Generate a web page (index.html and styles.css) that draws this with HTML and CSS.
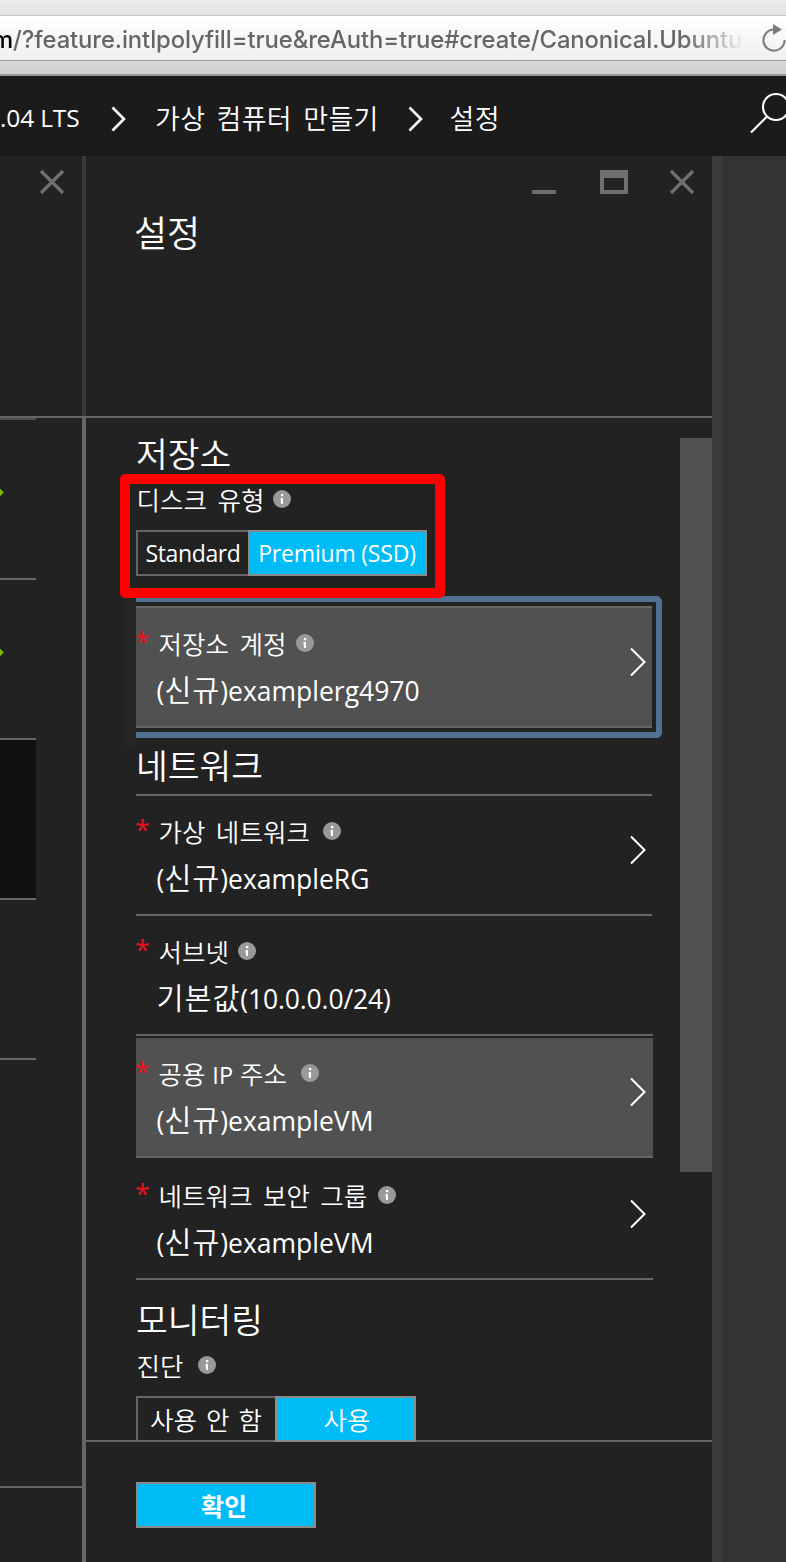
FILE: index.html
```html
<!DOCTYPE html>
<html lang="ko">
<head>
<meta charset="utf-8">
<title>설정</title>
<link rel="stylesheet" href="styles.css">
</head>
<body>
<div class="toolbar">
  <div class="address">
    <div class="url"><span class="host">m</span>/?feature.intlpolyfill=true&amp;reAuth=true#create/Canonical.Ubuntu</div>
    <svg class="reload" width="26" height="32" viewBox="0 0 26 32"><path d="M13 7.600A10.600 10.600 0 1 0 24.600 18" fill="none" stroke="#7b7b7b" stroke-width="2"/><path d="M13 2v11l9-5.500z" fill="#7b7b7b"/></svg>
  </div>
</div>
<nav class="crumbs">
  <span class="crumb crumb-os">.04 LTS</span>
  <svg class="sep sep-1" width="18" height="28" viewBox="0 0 18 28"><path d="M1.500 3.500l11.500 11.500L1.500 26.500" fill="none" stroke="#fff" stroke-width="2.600"/></svg>
  <span class="crumb crumb-ko crumb-create">가상 컴퓨터 만들기</span>
  <svg class="sep sep-2" width="18" height="28" viewBox="0 0 18 28"><path d="M2.500 3.500l11.500 11.500L2.500 26.500" fill="none" stroke="#fff" stroke-width="2.600"/></svg>
  <span class="crumb crumb-ko">설정</span>
  <svg class="search" width="38" height="44" viewBox="0 0 38 44"><g fill="none" stroke="#fff" stroke-width="2.200"><circle cx="28" cy="16" r="13"/><path d="M19 25.500L3 41.500"/></g></svg>
</nav>
<main class="blades">
  <aside class="prev">
    <div class="prev-head"><svg width="26" height="26" viewBox="0 0 26 26"><path d="M2 2l22 22M24 2L2 24" stroke="#707070" stroke-width="3.200"/></svg></div>
    <div class="prev-body">
      <div class="step first"><i class="tick"></i></div>
      <div class="step"><i class="tick"></i></div>
      <div class="step current"></div>
      <div class="step"></div>
    </div>
    <div class="prev-foot"></div>
  </aside>
  <div class="divider"></div>
  <section class="blade">
    <header class="blade-head">
      <div class="controls">
        <svg class="min" width="24" height="26" viewBox="0 0 24 26"><path d="M0 21h24v4H0z" fill="#707070"/></svg>
        <svg width="28" height="26" viewBox="0 0 28 26"><path d="M0 1h28v24H0zM4 9v12h20V9z" fill="#707070" fill-rule="evenodd"/></svg>
        <svg width="26" height="26" viewBox="0 0 26 26"><path d="M2 2l22 22M24 2L2 24" stroke="#707070" stroke-width="3.200"/></svg>
      </div>
      <h1>설정</h1>
    </header>
    <div class="blade-body">
      <div class="form">
        <h2>저장소</h2>
        <div class="field disk">
          <div class="caption"><span class="label w-disk">디스크 유형</span><svg class="info" viewBox="0 0 18 18"><circle cx="9" cy="9" r="9"/><path d="M8 4h2.300v2.300H8zM7.500 8H10v6H8z"/></svg></div>
          <div class="seg"><span class="opt std">Standard</span><span class="opt on prem">Premium (SSD)</span></div>
        </div>
        <div class="focus">
          <div class="row filled top">
            <div class="caption"><b class="req">*</b><span class="label w-acct">저장소 계정</span><svg class="info" viewBox="0 0 18 18"><circle cx="9" cy="9" r="9"/><path d="M8 4h2.300v2.300H8zM7.500 8H10v6H8z"/></svg></div>
            <div class="value">(<span class="ko">신규</span>)examplerg4970</div>
            <svg class="go" viewBox="0 0 18 30"><path d="M2 1.500l13.500 13.500L2 28.500"/></svg>
          </div>
        </div>
        <h2 class="net">네트워크</h2>
        <div class="row top">
          <div class="caption"><b class="req">*</b><span class="label w-vnet">가상 네트워크</span><svg class="info" viewBox="0 0 18 18"><circle cx="9" cy="9" r="9"/><path d="M8 4h2.300v2.300H8zM7.500 8H10v6H8z"/></svg></div>
          <div class="value">(<span class="ko">신규</span>)exampleRG</div>
          <svg class="go" viewBox="0 0 18 30"><path d="M2 1.500l13.500 13.500L2 28.500"/></svg>
        </div>
        <div class="row">
          <div class="caption"><b class="req">*</b><span class="label w-sub">서브넷</span><svg class="info" viewBox="0 0 18 18"><circle cx="9" cy="9" r="9"/><path d="M8 4h2.300v2.300H8zM7.500 8H10v6H8z"/></svg></div>
          <div class="value tight"><span class="ko">기본값</span>(10.0.0.0/24)</div>
        </div>
        <div class="row filled spaced">
          <div class="caption"><b class="req">*</b><span class="label w-ip">공용 <span class="lat">IP</span> 주소</span><svg class="info" viewBox="0 0 18 18"><circle cx="9" cy="9" r="9"/><path d="M8 4h2.300v2.300H8zM7.500 8H10v6H8z"/></svg></div>
          <div class="value">(<span class="ko">신규</span>)exampleVM</div>
          <svg class="go" viewBox="0 0 18 30"><path d="M2 1.500l13.500 13.500L2 28.500"/></svg>
        </div>
        <div class="row spaced">
          <div class="caption"><b class="req">*</b><span class="label w-nsg">네트워크 보안 그룹</span><svg class="info" viewBox="0 0 18 18"><circle cx="9" cy="9" r="9"/><path d="M8 4h2.300v2.300H8zM7.500 8H10v6H8z"/></svg></div>
          <div class="value">(<span class="ko">신규</span>)exampleVM</div>
          <svg class="go" viewBox="0 0 18 30"><path d="M2 1.500l13.500 13.500L2 28.500"/></svg>
        </div>
        <h2 class="mon">모니터링</h2>
        <div class="field">
          <div class="caption"><span class="label w-diag">진단</span><svg class="info" viewBox="0 0 18 18"><circle cx="9" cy="9" r="9"/><path d="M8 4h2.300v2.300H8zM7.500 8H10v6H8z"/></svg></div>
          <div class="seg diag"><span class="opt ko-opt off">사용 안 함</span><span class="opt ko-opt on use">사용</span></div>
        </div>
      </div>
      <div class="scroll"></div>
    </div>
    <footer class="blade-foot"><button class="ok">확인</button></footer>
  </section>
  <div class="edge"></div>
</main>
</body>
</html>
```
FILE: styles.css
```css
*, *::before, *::after { box-sizing: border-box; }
body {
  margin: 0;
  width: 786px;
  height: 1562px;
  overflow: hidden;
  background: #333;
  color: #fff;
  font-family: "Open Sans", "Noto Sans CJK KR", sans-serif;
}
svg { display: block; flex: none; }
h1, h2 { margin: 0; font-weight: 350; white-space: nowrap; }

.toolbar {
  height: 76px;
  padding-top: 15px;
  background: linear-gradient(#ebebeb, #e4e4e4 15px, #d8d8d8 60px, #d1d1d1);
  border-bottom: 2px solid #999;
}
.address {
  display: flex;
  height: 46px;
  border-top: 1px solid #c6c6c6;
  border-bottom: 1px solid #9b9b9b;
  background: linear-gradient(#fff, #efefef);
}
.url {
  width: 745px;
  overflow: hidden;
  white-space: nowrap;
  color: #666;
  font: 450 23.800px/47px Inter, sans-serif;
  letter-spacing: -0.090px;
  text-indent: -8px;
  -webkit-mask-image: linear-gradient(90deg, #000 685px, transparent 745px);
  mask-image: linear-gradient(90deg, #000 685px, transparent 745px);
}
.host { color: #000; }
.reload { margin: 6px 0 0 16px; }

.crumbs {
  display: flex;
  height: 80px;
  background: #1b1b1b;
  overflow: hidden;
}
.crumb { white-space: nowrap; }
.crumb-os { width: 111px; font-size: 24.500px; line-height: 84px; letter-spacing: -0.150px; }
.crumb-ko { font-size: 27px; line-height: 86px; font-weight: 350; letter-spacing: 0.300px; word-spacing: 4px; }
.crumb-create { width: 252px; }
.sep { margin-top: 28px; }
.sep-1 { margin-right: 26px; }
.sep-2 { margin-right: 24.500px; }
.search { margin: 15px 0 0 auto; }

.blades { display: flex; height: 1406px; }
.prev { width: 82px; background: #222; display: flex; flex-direction: column; }
.prev-head { height: 262px; padding: 13px 0 0 39px; border-bottom: 2px solid #666; }
.prev-body { height: 1068px; }
.step { position: relative; width: 36px; height: 160px; border-bottom: 2px solid #666; overflow: hidden; }
.step.first { height: 162px; border-top: 2px solid #505050; }
.step.current { background: #111; }
.tick { position: absolute; left: -7px; top: 68px; width: 9px; height: 9px; background: #7fba00; transform: rotate(45deg); }
.prev-foot { flex: 1; border-top: 2px solid #666; }
.divider { width: 4px; background: linear-gradient(#3a3a3a 260px, #666 260px); }

.blade { width: 626px; background: #222; display: flex; flex-direction: column; }
.blade-head { height: 262px; border-bottom: 2px solid #666; padding-top: 13px; }
.controls { display: flex; justify-content: flex-end; gap: 41px; padding-right: 17px; }
.min { margin-right: 3px; }
h1 { padding-left: 48px; margin-top: 11px; font-size: 36px; line-height: 56px; }
.blade-body { display: flex; height: 1022px; }
.form { width: 594px; height: 1024px; padding-left: 50px; overflow: hidden; flex: none; position: relative; }
h2 { height: 56px; padding-top: 8px; font-size: 34.500px; line-height: 56px; }
.field { position: relative; }
.disk::after {
  content: "";
  position: absolute;
  left: -16px;
  top: 0;
  width: 325px;
  height: 124px;
  border: 10px solid red;
  border-radius: 5px;
  z-index: 2;
}
.disk { padding-top: 10px; }
.caption { display: flex; align-items: center; height: 30px; }
.label { font-size: 25.500px; font-weight: 350; line-height: 32px; height: 30px; white-space: nowrap; word-spacing: 3.500px; letter-spacing: 0.100px; }
.lat { font-size: 23.500px; line-height: 20px; font-weight: 400; }
.info { width: 18px; height: 18px; }
.info circle { fill: #999; }
.info path { fill: #fff; }
.w-disk { width: 137px; padding-left: 0.500px; }
.w-acct { width: 137.500px; }
.w-vnet { width: 164.500px; }
.w-sub { width: 79.500px; }
.w-ip { width: 142.500px; word-spacing: 0; }
.w-nsg { width: 219.500px; }
.w-diag { width: 62px; padding-left: 0.500px; }
.seg { display: flex; margin-top: 16px; height: 46px; }
.opt {
  border: 2px solid #666;
  font-size: 23px;
  line-height: 43px;
  text-align: center;
  white-space: nowrap;
}
.on { background: #00bcf6; border-color: #8b8b8b; }
.std { width: 112px; border-right: 0; letter-spacing: -0.350px; }
.prem { width: 179px; letter-spacing: -0.200px; padding-right: 1px; }
.ko-opt { font-size: 25.500px; font-weight: 350; line-height: 44px; word-spacing: 2.500px; }
.off { width: 139px; border-right: 0; padding-right: 1px; }
.use { width: 141px; padding-left: 3px; }

.focus {
  position: relative;
  width: 526px;
  height: 142px;
  margin-top: 20px;
  padding: 4px 4px 4px 0;
  border: 6px solid #527092;
  border-left: 0;
  border-radius: 0 6px 6px 0;
}
.focus::before { content: ""; position: absolute; left: -13px; top: -6px; width: 13px; height: 151px; background: #252525; }
.row { position: relative; width: 517px; height: 120px; padding-top: 20px; border-bottom: 2px solid #666; }
.row.top { height: 122px; border-top: 2px solid #666; width: 516px; }
.filled { background: #515151; }
.spaced { margin-top: 2px; }
.req { width: 22.500px; color: #e81123; font-size: 27px; font-weight: 500; line-height: 27px; height: 30px; text-indent: -1px; }
.value { margin: 13px 0 0 20.500px; height: 40px; font-size: 26.500px; line-height: 40px; white-space: nowrap; }
.value.tight { letter-spacing: -0.150px; }
.ko { font-size: 29.500px; line-height: 20px; font-weight: 350; letter-spacing: 0.800px; }
.go { position: absolute; right: 6px; top: 39px; width: 18px; height: 30px; fill: none; stroke: #fff; stroke-width: 2; }
.top .go { right: 5px; }
.net { padding-top: 0; }
.mon { height: 70px; padding-top: 12px; }
.scroll { width: 32px; height: 734px; margin-top: 20px; background: #515151; }
.blade-foot { flex: 1; border-top: 2px solid #666; padding: 40px 0 0 50px; }
.ok {
  display: block;
  width: 180px;
  height: 46px;
  padding: 1px 4px 0 0;
  border: 2px solid #8b8b8b;
  background: #00bcf6;
  color: #fff;
  font: 700 25px/42px "Open Sans", "Noto Sans CJK KR", sans-serif;
}
.edge { width: 10px; background: #3b3c3e; }
```
